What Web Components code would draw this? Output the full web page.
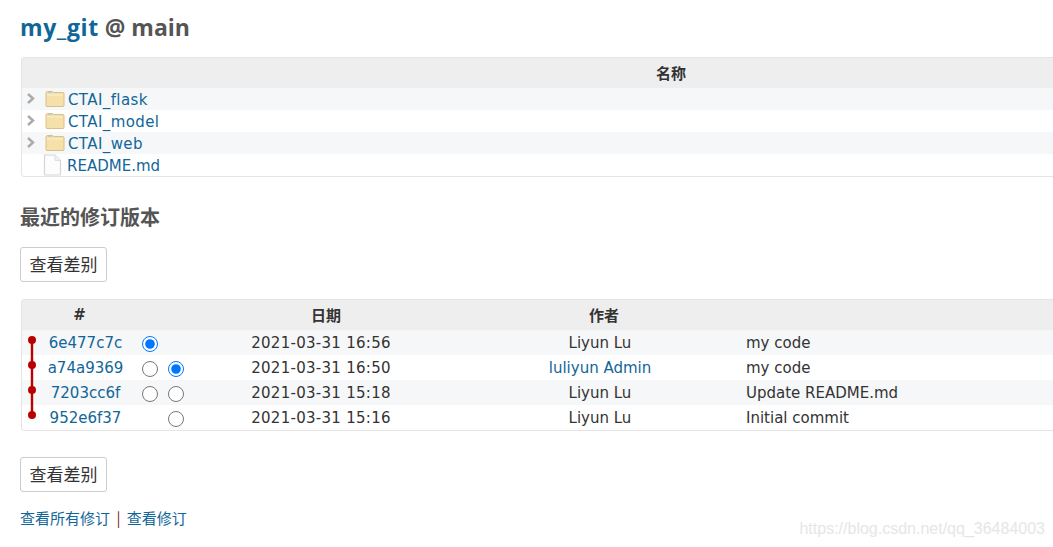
<!DOCTYPE html>
<html lang="zh">
<head>
<meta charset="utf-8">
<title>my_git @ main</title>
<style>
  html, body { margin: 0; padding: 0; background: #fff; height: 100%; overflow: hidden; }
</style>
</head>
<body>
<repo-page>
  <repo-title slot="title" repo="my_git" branch="main"></repo-title>
  <file-table slot="files">
    <file-row type="dir" name="CTAI_flask"></file-row>
    <file-row type="dir" name="CTAI_model"></file-row>
    <file-row type="dir" name="CTAI_web"></file-row>
    <file-row type="file" name="README.md"></file-row>
  </file-table>
  <rev-table slot="revisions">
    <rev-row hash="6e477c7c" date="2021-03-31 16:56" author="Liyun Lu" comment="my code" first="on"></rev-row>
    <rev-row hash="a74a9369" date="2021-03-31 16:50" author="luliyun Admin" comment="my code" first="off" second="on" author-link></rev-row>
    <rev-row hash="7203cc6f" date="2021-03-31 15:18" author="Liyun Lu" comment="Update README.md" first="off" second="off"></rev-row>
    <rev-row hash="952e6f37" date="2021-03-31 15:16" author="Liyun Lu" comment="Initial commit" second="off"></rev-row>
  </rev-table>
</repo-page>

<script>
const BODY_FONT = `"DejaVu Sans", "Noto Sans CJK SC", sans-serif`;
const CJK_FONT = `"Noto Sans CJK SC", "DejaVu Sans", sans-serif`;

class RepoPage extends HTMLElement {
  constructor() {
    super();
    this.attachShadow( {mode: 'open'} ).innerHTML = /* template */ `
      <style>
        :host {
          box-sizing: border-box;
          color: #333;
          display: block;
          font-family: ${BODY_FONT};
          height: 547px;
          overflow: hidden;
          padding: 13px 0 0 20px;
          position: relative;
          width: 1053px;
        }
        h3 {
          color: #555;
          font-family: ${CJK_FONT};
          font-size: 20px;
          font-weight: 700;
          line-height: 28px;
          margin: 26px 0 16px;
        }
        .lower { margin-top: 26px; }
        .links {
          font-family: ${CJK_FONT};
          font-size: 15px;
          line-height: 22px;
          margin-top: 15px;
        }
        .links a { color: #169; text-decoration: none; }
        .links span { color: #822; padding: 0 3px; }
        .mark {
          color: #e6e6e6;
          font-family: "Liberation Sans", sans-serif;
          font-size: 16px;
          line-height: 20px;
          position: absolute;
          right: 8px;
          bottom: 8px;
        }
        ::slotted( [slot=revisions] ) { margin-top: 17px; }
      </style>
      <slot name="title"></slot>
      <slot name="files"></slot>
      <h3>最近的修订版本</h3>
      <diff-button>查看差别</diff-button>
      <slot name="revisions"></slot>
      <div class="lower"><diff-button>查看差别</diff-button></div>
      <div class="links"><a href="#">查看所有修订</a> <span>|</span> <a href="#">查看修订</a></div>
      <div class="mark">https://blog.csdn.net/qq_36484003</div>
    `;
  }
}

class RepoTitle extends HTMLElement {
  connectedCallback() {
    this.attachShadow( {mode: 'open'} ).innerHTML = /* template */ `
      <style>
        :host {
          color: #555;
          display: block;
          font-family: "Open Sans", sans-serif;
          font-size: 23px;
          font-weight: 700;
          line-height: 28px;
          margin-bottom: 16px;
        }
        a { color: #169; letter-spacing: 0.6px; text-decoration: none; }
      </style>
      <a href="#">${this.getAttribute( 'repo' )}</a> @ ${this.getAttribute( 'branch' )}
    `;
  }
}

class FileTable extends HTMLElement {
  constructor() {
    super();
    this.attachShadow( {mode: 'open'} ).innerHTML = /* template */ `
      <style>
        :host {
          border: solid 1px #e4e4e4;
          border-radius: 3px;
          box-sizing: border-box;
          display: block;
          margin-left: 1px;
          width: 1300px;
        }
        header {
          background: #eee;
          font-family: ${CJK_FONT};
          font-size: 15px;
          font-weight: 700;
          height: 30px;
          line-height: 30px;
          text-align: center;
        }
        ::slotted( file-row:nth-child( odd ) ) { background: #f6f7f8; }
      </style>
      <header>名称</header>
      <slot></slot>
    `;
  }
}

class FileRow extends HTMLElement {
  connectedCallback() {
    const dir = this.getAttribute( 'type' ) === 'dir';
    const arrow = `<svg class="arrow" width="10" height="12" viewBox="0 0 10 12"><path d="M2 1 L7 5.5 L2 10" fill="none" stroke="#aaa" stroke-width="2.4"/></svg>`;
    const folder = `<svg class="icon" width="20" height="18" viewBox="0 0 20 18">
      <path d="M1 3 Q1 1.5 3 1.5 L7 1.5 Q8 1.5 8.5 2.5 L18 2.5 Q19 2.5 19 4 L19 15.5 Q19 16.5 18 16.5 L2 16.5 Q1 16.5 1 15.5 Z" fill="#f5e0a9" stroke="#d9c08a"/>
      <path d="M2 5 L18 5" stroke="#fbf0cf"/><path d="M3 2.5 L7 2.5" stroke="#a9d3ea"/>
    </svg>`;
    const file = `<svg class="icon doc" width="20" height="22" viewBox="0 0 20 22">
      <path d="M2.5 1 L13 1 L18.5 6.5 L18.5 20 Q18.5 21 17.5 21 L3.5 21 Q2.5 21 2.5 20 Z" fill="#fdfdfd" stroke="#d6d6d6" stroke-width="1.2"/>
      <path d="M13 1 L13 6.5 L18.5 6.5" fill="#f1f1f1" stroke="#dedede"/>
    </svg>`;
    this.attachShadow( {mode: 'open'} ).innerHTML = /* template */ `
      <style>
        :host {
          align-items: center;
          display: flex;
          font-size: 15px;
          height: 22px;
          line-height: 20px;
        }
        .slot-arrow { display: flex; justify-content: center; width: 17px; margin-right: 4px; }
        .icon { display: block; flex: none; margin-left: 2px; }
        .doc { margin-left: -1px; margin-right: 2px; }
        a { color: #169; margin-left: 3px; padding-top: 2px; text-decoration: none; }
        .is-dir { letter-spacing: 0.4px; }
      </style>
      <span class="slot-arrow">${dir ? arrow : ''}</span>
      ${dir ? folder : file}
      <a class="${dir ? 'is-dir' : ''}" href="#">${this.getAttribute( 'name' )}</a>
    `;
  }
}

class DiffButton extends HTMLElement {
  constructor() {
    super();
    this.attachShadow( {mode: 'open'} ).innerHTML = /* template */ `
      <style>
        :host { display: block; width: max-content; }
        button {
          background: #fff;
          border: solid 1px #ccc;
          border-radius: 3px;
          color: #333;
          display: block;
          font-family: ${CJK_FONT};
          font-size: 17px;
          height: 35px;
          line-height: 31px;
          padding: 0 8px 2px;
          width: 87px;
        }
      </style>
      <button type="button"><slot></slot></button>
    `;
  }
}

class RevTable extends HTMLElement {
  constructor() {
    super();
    this.attachShadow( {mode: 'open'} ).innerHTML = /* template */ `
      <style>
        :host {
          border: solid 1px #e4e4e4;
          border-radius: 3px;
          box-sizing: border-box;
          display: block;
          margin-left: 1px;
          position: relative;
          width: 1300px;
        }
        header {
          background: #eee;
          display: grid;
          font-family: ${CJK_FONT};
          font-size: 15px;
          font-weight: 700;
          grid-template-columns: 115px 26px 26px 274px 282px 1fr;
          height: 30px;
          line-height: 30px;
          text-align: center;
        }
        .num { font-family: ${BODY_FONT}; font-size: 15px; }
        ::slotted( rev-row:nth-child( odd ) ) { background: #f6f7f8; }
        svg { left: 5px; position: absolute; top: 30px; }
      </style>
      <header>
        <span class="num">#</span><span></span><span></span><span>日期</span><span>作者</span><span></span>
      </header>
      <slot></slot>
      <svg width="10" height="100" viewBox="0 0 10 100">
        <path d="M5 10 L5 85" stroke="#b00" stroke-width="2.4"/>
        <circle cx="5" cy="10" r="4" fill="#b00"/>
        <circle cx="5" cy="35" r="4" fill="#b00"/>
        <circle cx="5" cy="60" r="4" fill="#b00"/>
        <circle cx="5" cy="85" r="4" fill="#b00"/>
      </svg>
    `;
  }
}

class RevRow extends HTMLElement {
  _radio( state, name ) {
    if( state === null ) {
      return '<span></span>';
    }
    return `<span class="cell"><input type="radio" name="${name}" ${state === 'on' ? 'checked' : ''}></span>`;
  }

  connectedCallback() {
    const author = this.getAttribute( 'author' );
    this.attachShadow( {mode: 'open'} ).innerHTML = /* template */ `
      <style>
        :host {
          display: grid;
          font-size: 15px;
          grid-template-columns: 115px 26px 26px 274px 282px 1fr;
          height: 25px;
          line-height: 27px;
        }
        a { color: #169; text-decoration: none; }
        .hash { padding-left: 12px; text-align: center; }
        .cell { align-items: center; display: flex; justify-content: center; padding-top: 2px; height: 23px; }
        input { height: 16px; margin: 0; width: 16px; }
        .date { letter-spacing: 0.28px; padding-right: 10px; text-align: center; }
        .author { padding-right: 8px; text-align: center; }
        .comment { padding-left: 1px; }
      </style>
      <a class="hash" href="#">${this.getAttribute( 'hash' )}</a>
      ${this._radio( this.getAttribute( 'first' ), 'rev' )}
      ${this._radio( this.getAttribute( 'second' ), 'rev_to' )}
      <span class="date">${this.getAttribute( 'date' )}</span>
      <span class="author">${this.hasAttribute( 'author-link' ) ? `<a href="#">${author}</a>` : author}</span>
      <span class="comment">${this.getAttribute( 'comment' )}</span>
    `;
  }
}

window.customElements.define( 'repo-page', RepoPage );
window.customElements.define( 'repo-title', RepoTitle );
window.customElements.define( 'file-table', FileTable );
window.customElements.define( 'file-row', FileRow );
window.customElements.define( 'diff-button', DiffButton );
window.customElements.define( 'rev-table', RevTable );
window.customElements.define( 'rev-row', RevRow );
</script>
</body>
</html>
